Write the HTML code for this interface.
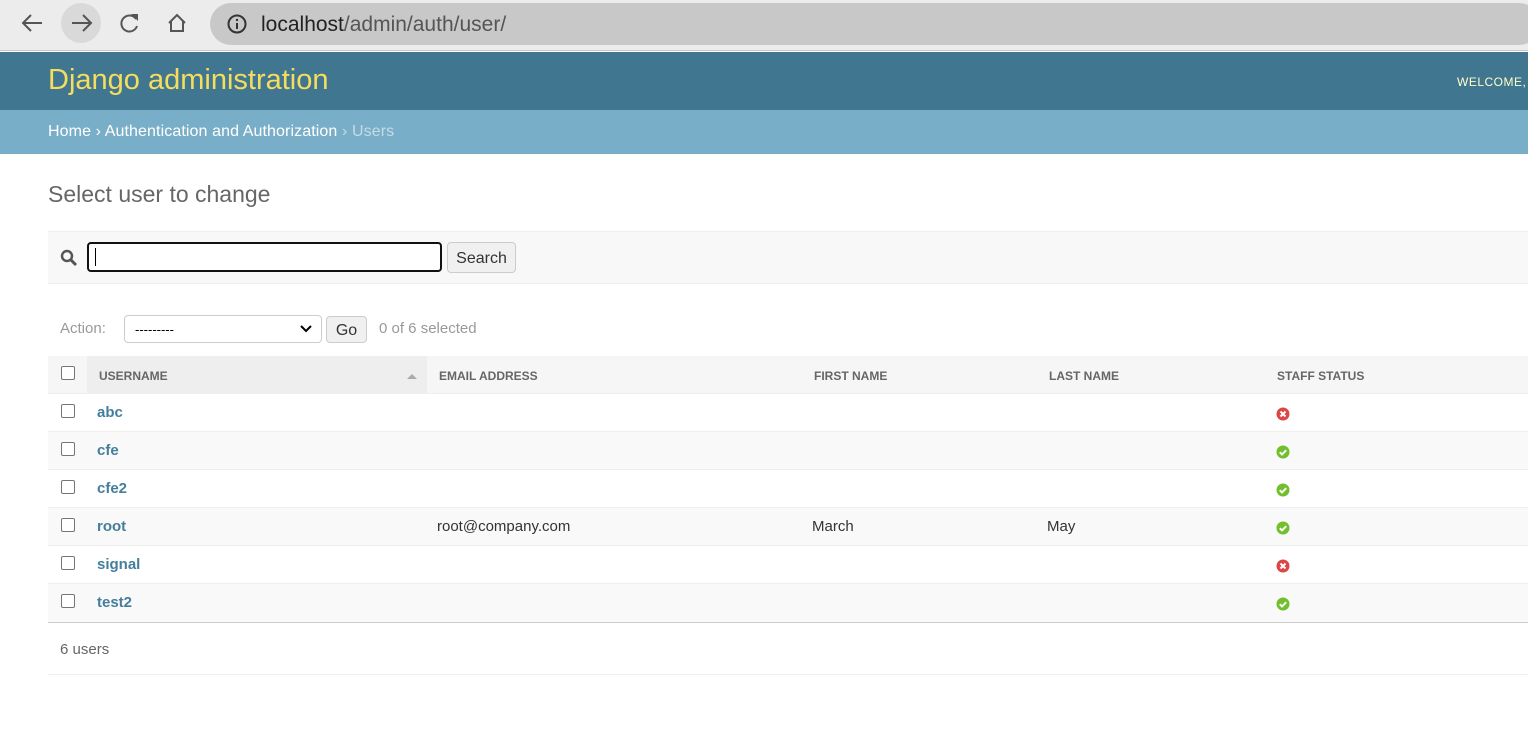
<!DOCTYPE html>
<html><head><style>
*{box-sizing:border-box;margin:0;padding:0}
body{width:1528px;height:746px;overflow:hidden;background:#fff;font-family:"Liberation Sans",sans-serif;position:relative}
.abs{position:absolute}
.cb{position:absolute;width:14px;height:14px;border:1px solid #767676;border-radius:2px;background:#fff}
.hd{position:absolute;top:369px;font-size:12px;font-weight:bold;color:#666}
.row{position:absolute;left:48px;width:1480px;height:38px;border-bottom:1px solid #eee}
.u{position:absolute;left:97px;font-size:15px;font-weight:bold;color:#447e9b}
.t{position:absolute;font-size:15px;color:#333}
</style></head><body>
<div class="abs" style="left:0;top:0;width:1528px;height:51px;background:#ececec;border-bottom:1px solid #c8c8c8"></div>
<svg class="abs" style="left:0;top:0" width="210" height="51">
<path d="M42 23H24M31 15l-8 8 8 8" stroke="#555" stroke-width="2" fill="none"/>
<circle cx="81" cy="23" r="20" fill="#d9d9d9"/>
<path d="M72 23h18M83 15l8 8-8 8" stroke="#555" stroke-width="2" fill="none"/>
<path d="M136 19a8 8 0 1 0 1 7" stroke="#555" stroke-width="2" fill="none"/><path d="M131 14h7v7z" fill="#555"/>
<path d="M169 23l8-8 8 8M171 21v10h12V21" stroke="#555" stroke-width="2" fill="none"/>
</svg>
<div class="abs" style="left:210px;top:3px;width:1330px;height:42px;border-radius:21px;background:#c8c8c8"></div>
<svg class="abs" style="left:226px;top:13px" width="22" height="22"><circle cx="11" cy="11" r="8.5" stroke="#333" stroke-width="2" fill="none"/><path d="M11 10v6" stroke="#333" stroke-width="2"/><circle cx="11" cy="7" r="1.2" fill="#333"/></svg>
<div class="abs" style="left:261px;top:13px;font-size:21px;color:#222">localhost<span style="color:#555">/admin/auth/user/</span></div>
<div class="abs" style="left:0;top:52px;width:1528px;height:58px;background:#417690"></div>
<div class="abs" style="left:48px;top:64px;font-size:29px;color:#f5dd5d;font-weight:300">Django administration</div>
<div class="abs" style="left:1457px;top:75px;font-size:12px;color:#ffc;letter-spacing:0.5px">WELCOME,</div>
<div class="abs" style="left:0;top:110px;width:1528px;height:44px;background:#79aec8"></div>
<div class="abs" style="left:48px;top:123px;font-size:16px;color:#fff;letter-spacing:0.1px">Home › Authentication and Authorization <span style="color:#c4dce8">› Users</span></div>
<div class="abs" style="left:48px;top:181px;font-size:23px;color:#666;font-weight:300">Select user to change</div>
<div class="abs" style="left:48px;top:231px;width:1480px;height:53px;background:#f8f8f8;border-top:1px solid #eee;border-bottom:1px solid #eee"></div>
<svg class="abs" style="left:60px;top:249px" width="18" height="18"><circle cx="7" cy="7" r="5" stroke="#555" stroke-width="2.5" fill="none"/><path d="M11 11l5 5" stroke="#555" stroke-width="3"/></svg>
<div class="abs" style="left:87px;top:242px;width:355px;height:30px;border:2px solid #111;border-radius:4px;background:#fff"></div>
<div class="abs" style="left:95px;top:248px;width:1px;height:18px;background:#000"></div>
<div class="abs" style="left:447px;top:242px;width:69px;height:31px;border:1px solid #ccc;border-radius:4px;background:#f0f0f0;font-size:16px;color:#333;text-align:center;line-height:31px">Search</div>
<div class="abs" style="left:60px;top:320px;font-size:15px;color:#999">Action:</div>
<div class="abs" style="left:124px;top:315px;width:198px;height:28px;border:1px solid #ccc;border-radius:4px;background:#fff;font-size:13px;padding:6px 10px;color:#000">---------</div>
<svg class="abs" style="left:299px;top:324px" width="14" height="10"><path d="M2 2l5 5 5-5" stroke="#000" stroke-width="2" fill="none"/></svg>
<div class="abs" style="left:326px;top:316px;width:41px;height:27px;border:1px solid #ccc;border-radius:4px;background:#f0f0f0;font-size:16px;text-align:center;line-height:28px;color:#333">Go</div>
<div class="abs" style="left:379px;top:320px;font-size:15px;color:#999">0 of 6 selected</div>
<div class="abs" style="left:48px;top:356px;width:1480px;height:38px;background:#f6f6f6;border-bottom:1px solid #eee"></div>
<div class="abs" style="left:87px;top:356px;width:340px;height:37px;background:#eee"></div>
<div class="cb" style="left:61px;top:366px"></div>
<div class="hd" style="left:99px">USERNAME</div>
<svg class="abs" style="left:407px;top:373px" width="10" height="7"><path d="M0 6l5-5 5 5z" fill="#aaa"/></svg>
<div class="hd" style="left:439px">EMAIL ADDRESS</div>
<div class="hd" style="left:814px">FIRST NAME</div>
<div class="hd" style="left:1049px">LAST NAME</div>
<div class="hd" style="left:1277px">STAFF STATUS</div>

<div class="row" style="top:394px;background:#fff"></div>
<div class="row" style="top:432px;background:#f9f9f9"></div>
<div class="row" style="top:470px;background:#fff"></div>
<div class="row" style="top:508px;background:#f9f9f9"></div>
<div class="row" style="top:546px;background:#fff"></div>
<div class="row" style="top:584px;background:#f9f9f9;border-bottom:1px solid #ccc;height:39px"></div>

<div class="cb" style="left:61px;top:404px"></div><div class="u" style="top:404px">abc</div>
<div class="cb" style="left:61px;top:442px"></div><div class="u" style="top:442px">cfe</div>
<div class="cb" style="left:61px;top:480px"></div><div class="u" style="top:480px">cfe2</div>
<div class="cb" style="left:61px;top:518px"></div><div class="u" style="top:518px">root</div>
<div class="t" style="left:437px;top:518px">root@company.com</div>
<div class="t" style="left:812px;top:518px">March</div>
<div class="t" style="left:1047px;top:518px">May</div>
<div class="cb" style="left:61px;top:556px"></div><div class="u" style="top:556px">signal</div>
<div class="cb" style="left:61px;top:594px"></div><div class="u" style="top:594px">test2</div>

<svg width="0" height="0" style="position:absolute"><defs>
<g id="no"><circle cx="7" cy="7" r="6.5" fill="#dd4646"/><path d="M4.5 4.5l5 5M9.5 4.5l-5 5" stroke="#fff" stroke-width="2"/></g>
<g id="yes"><circle cx="7" cy="7" r="6.5" fill="#70bf2b"/><path d="M3.8 7.2l2.2 2.2 4.2-4.2" stroke="#fff" stroke-width="2" fill="none"/></g>
</defs></svg>
<svg class="abs" style="left:1276px;top:407px" width="14" height="14"><use href="#no"/></svg>
<svg class="abs" style="left:1276px;top:445px" width="14" height="14"><use href="#yes"/></svg>
<svg class="abs" style="left:1276px;top:483px" width="14" height="14"><use href="#yes"/></svg>
<svg class="abs" style="left:1276px;top:521px" width="14" height="14"><use href="#yes"/></svg>
<svg class="abs" style="left:1276px;top:559px" width="14" height="14"><use href="#no"/></svg>
<svg class="abs" style="left:1276px;top:597px" width="14" height="14"><use href="#yes"/></svg>

<div class="abs" style="left:60px;top:641px;font-size:15px;color:#666">6 users</div>
<div class="abs" style="left:48px;top:674px;width:1480px;height:1px;background:#eee"></div>
</body></html>
